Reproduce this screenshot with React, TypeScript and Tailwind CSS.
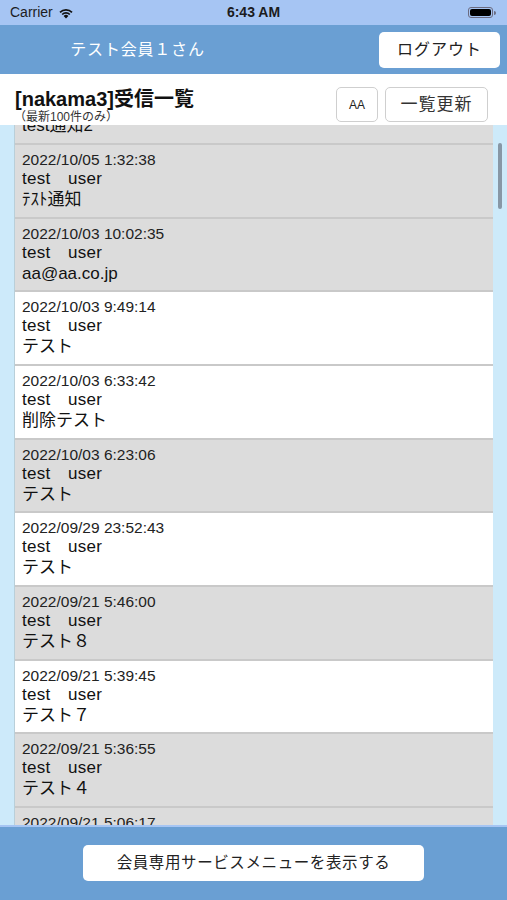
import React from "react";

type Item = { date: string; name: string; msg: string; white: boolean };

const items: Item[] = [
  { date: "2022/10/05 1:40:02", name: "test　user", msg: "test通知2", white: false },
  { date: "2022/10/05 1:32:38", name: "test　user", msg: "ﾃｽﾄ通知", white: false },
  { date: "2022/10/03 10:02:35", name: "test　user", msg: "aa@aa.co.jp", white: false },
  { date: "2022/10/03 9:49:14", name: "test　user", msg: "テスト", white: true },
  { date: "2022/10/03 6:33:42", name: "test　user", msg: "削除テスト", white: true },
  { date: "2022/10/03 6:23:06", name: "test　user", msg: "テスト", white: false },
  { date: "2022/09/29 23:52:43", name: "test　user", msg: "テスト", white: true },
  { date: "2022/09/21 5:46:00", name: "test　user", msg: "テスト８", white: false },
  { date: "2022/09/21 5:39:45", name: "test　user", msg: "テスト７", white: true },
  { date: "2022/09/21 5:36:55", name: "test　user", msg: "テスト４", white: false },
  { date: "2022/09/21 5:06:17", name: "test　user", msg: "テスト", white: false },
];

const font = { fontFamily: '"Liberation Sans", "Noto Sans CJK JP", sans-serif' };

export default function App() {
  return (
    <div className="w-[507px] h-[900px] flex flex-col overflow-hidden text-[#1a1a1a]" style={font}>
      {/* status bar */}
      <div className="h-[25px] bg-[#a6c5f3] flex items-center justify-between px-[10px] relative shrink-0">
        <div className="flex items-center gap-[5px] text-[14px] text-[#1c1c1e]">
          <span>Carrier</span>
          <svg width="16" height="12" viewBox="0 0 16 12">
            <path d="M8 11.5 L5.6 8.9 A3.4 3.4 0 0 1 10.4 8.9 Z" fill="#111" />
            <path d="M3.6 6.9 A6.2 6.2 0 0 1 12.4 6.9 L11.2 8.1 A4.5 4.5 0 0 0 4.8 8.1 Z" fill="#111" />
            <path d="M1.4 4.7 A9.3 9.3 0 0 1 14.6 4.7 L13.4 5.9 A7.6 7.6 0 0 0 2.6 5.9 Z" fill="#111" />
          </svg>
        </div>
        <div className="absolute left-0 right-0 text-center text-[14px] font-bold text-[#1c1c1e] pointer-events-none">6:43 AM</div>
        <div className="flex items-center mr-[1px]">
          <div className="w-[25px] h-[11px] rounded-[3px] border border-[#6b6b80] p-[1px]">
            <div className="w-full h-full rounded-[2px] bg-black" />
          </div>
          <div className="w-[2px] h-[4px] bg-[#6b6b80] rounded-r-sm ml-[1px]" />
        </div>
      </div>

      {/* header */}
      <div className="h-[49px] bg-[#6a9fd3] flex items-center shrink-0">
        <div className="flex-1 text-center text-white text-[16px] pr-[104px] tracking-[0.8px]">テスト会員１さん</div>
        <div className="w-[121px] h-[36px] bg-white rounded-[5px] flex items-center justify-center text-[16px] text-[#222] mr-[7px] tracking-[1px]">
          ログアウト
        </div>
      </div>

      {/* title area */}
      <div className="h-[51px] bg-white flex items-start justify-between shrink-0 relative z-10">
        <div className="pl-[15px] pt-[14px]">
          <div className="text-[20px] font-bold leading-[22px] text-[#111]">[nakama3]受信一覧</div>
          <div className="text-[12px] leading-[14px] text-[#333] -ml-[1px]">（最新100件のみ）</div>
        </div>
        <div className="flex gap-[7px] pt-[13px] pr-[19px]">
          <div className="w-[42px] h-[35px] border border-[#cfcfcf] rounded-[5px] flex items-center justify-center text-[12px] text-[#222]">
            AA
          </div>
          <div className="w-[103px] h-[35px] border border-[#cfcfcf] rounded-[5px] flex items-center justify-center text-[17px] text-[#333] tracking-[1px]">
            一覧更新
          </div>
        </div>
      </div>

      {/* list */}
      <div className="flex-1 bg-[#cdeafa] overflow-hidden relative">
        <div className="mt-[-55.67px] ml-[14px] mr-[14px] border-l border-[#b9cfd9]">
          {items.map((it, i) => (
            <div
              key={i}
              className={`h-[73.67px] box-border border-t-2 border-[#c9c9c9] pl-[7px] pt-[6px] ${it.white ? "bg-white" : "bg-[#dcdcdc]"}`}
            >
              <div className="text-[15.5px] leading-[18px] text-[#222]">{it.date}</div>
              <div className="text-[17px] leading-[20px] text-[#111] tracking-[0.3px]">{it.name}</div>
              <div className="text-[17px] leading-[21px] text-[#111]">{it.msg}</div>
            </div>
          ))}
        </div>
        <div className="absolute right-[5px] top-[18px] w-[4px] h-[66px] rounded-full bg-[#8797a6]" />
      </div>

      {/* bottom bar */}
      <div className="h-[75px] bg-[#6a9fd3] border-t-2 border-[#a6c5f3] flex items-start justify-center shrink-0">
        <div className="mt-[18px] w-[341px] h-[36px] bg-white rounded-[5px] flex items-center justify-center text-[15.5px] text-[#222] tracking-[0.6px]">
          会員専用サービスメニューを表示する
        </div>
      </div>
    </div>
  );
}
